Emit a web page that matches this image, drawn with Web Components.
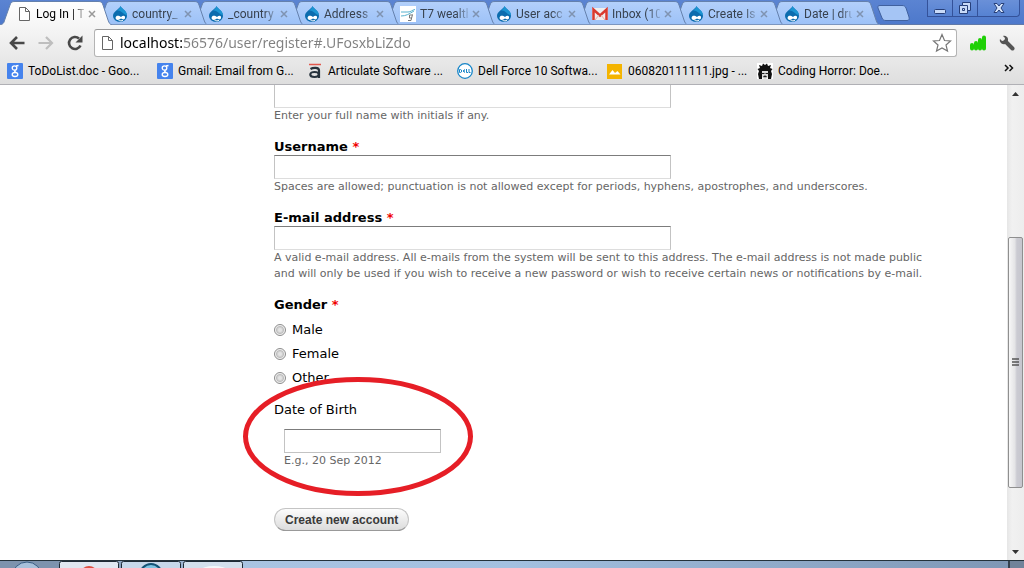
<!DOCTYPE html>
<html lang="en">
<head>
<meta charset="utf-8">
<title>Log In</title>
<style>
  html, body {
    margin: 0;
    height: 100%;
  }
  body {
    overflow: hidden;
    background: white;
    font-family: "DejaVu Sans", sans-serif;
  }
</style>
</head>
<body>
<browser-window>
  <browser-tab slot="tab" icon="page" active>Log In | T</browser-tab>
  <browser-tab slot="tab" icon="drupal">country_</browser-tab>
  <browser-tab slot="tab" icon="drupal">_country</browser-tab>
  <browser-tab slot="tab" icon="drupal">Address</browser-tab>
  <browser-tab slot="tab" icon="wealth">T7 wealth</browser-tab>
  <browser-tab slot="tab" icon="drupal">User acc</browser-tab>
  <browser-tab slot="tab" icon="gmail">Inbox (10</browser-tab>
  <browser-tab slot="tab" icon="drupal">Create Is</browser-tab>
  <browser-tab slot="tab" icon="drupal">Date | dru</browser-tab>

  <book-mark slot="bookmark" icon="google">ToDoList.doc - Goo...</book-mark>
  <book-mark slot="bookmark" icon="google">Gmail: Email from G...</book-mark>
  <book-mark slot="bookmark" icon="articulate">Articulate Software ...</book-mark>
  <book-mark slot="bookmark" icon="dell">Dell Force 10 Softwa...</book-mark>
  <book-mark slot="bookmark" icon="picture">060820111111.jpg - ...</book-mark>
  <book-mark slot="bookmark" icon="horror">Coding Horror: Doe...</book-mark>

  <register-form>
    <form-field cut name="Full name">Enter your full name with initials if any.</form-field>
    <form-field label="Username" required>Spaces are allowed; punctuation is not allowed except for periods, hyphens, apostrophes, and underscores.</form-field>
    <form-field label="E-mail address" required>A valid e-mail address. All e-mails from the system will be sent to this address. The e-mail address is not made public and will only be used if you wish to receive a new password or wish to receive certain news or notifications by e-mail.</form-field>
    <radio-group label="Gender" options="Male,Female,Other"></radio-group>
    <date-field label="Date of Birth">E.g., 20 Sep 2012</date-field>
    <submit-button>Create new account</submit-button>
  </register-form>
</browser-window>

<script>
const drop = `
  <path d="M8.600 0C9 2.500 15 4.500 15 10A7 6 0 0 1 1 10C1 5.500 6.500 4 8.600 0Z" fill="#0b6cae"/>
  <path d="M8.600 0C9 2.500 15 4.500 15 9C11 9 10 4 5 4.500C7 3 8 2 8.600 0Z" fill="#1b94d2"/>
  <path d="M3.500 12C4 8.800 7 9.500 9 11C11 9 13.500 9.500 13 12C12.500 14.500 10 13 9 12.500C6.500 14.600 4 14.200 3.500 12Z" fill="#fff"/>
  <path d="M6.500 14.200C8 15.200 10 15 11 14.200" stroke="#fff" fill="none"/>`;

const icons = {
  page: `<path d="M3.500 1.500H9.500L13.500 5.500V14.500H3.500Z" fill="#fff" stroke="#666"/><path d="M9.500 1.500V5.500H13.500" fill="none" stroke="#666"/>`,
  drupal: drop,
  wealth: `<rect width="16" height="16" fill="#fff"/><path d="M1 6H8C11 6 12 4 15 3.500M1 10C6 10 9 8 14 5" stroke="#57b2cf" fill="none"/><path d="M12.500 9H9.500V12H12M12.500 8.500L11 14.500H8" stroke="#777" fill="none"/>`,
  gmail: `<rect y="2" width="16" height="12" rx="1" fill="#eee"/><path d="M1.500 14V3.500L8 9.500L14.500 3.500V14" fill="none" stroke="#d9392f" stroke-width="2.500"/><path d="M3 14L7 9M13 14L9 9" stroke="#e9a9a5"/>`,
  google: `<rect width="16" height="16" rx="1" fill="#4583ed"/><g fill="none" stroke="#fff" stroke-width="1.300"><ellipse cx="7.500" cy="5" rx="2.300" ry="2.200"/><path d="M9 3L11.500 2.500M8.500 7C7 8 7.500 8.500 9 9.500"/><ellipse cx="8" cy="11.500" rx="2.800" ry="2"/></g>`,
  articulate: `<path d="M2 1.500H14" stroke="#e2574c" stroke-width="1.500"/><g fill="none" stroke="#26323c" stroke-width="2.200"><path d="M3.500 6C6 4.500 12 4 12 7.500V15"/><ellipse cx="7.500" cy="11.500" rx="4.200" ry="2.500"/></g>`,
  dell: `<circle cx="8" cy="8" r="7.300" fill="#fff" stroke="#1685c8" stroke-width="1.300"/><path d="M2.500 6.500V9.500H3.500C5 9.500 5 6.500 3.500 6.500ZM8 6.500L6 8L8 9.500M6.500 8H8M9.500 6V9.500H11M12 6V9.500H13.500" fill="none" stroke="#1685c8"/>`,
  picture: `<rect width="15" height="15" y="1" fill="#f4b400"/><path d="M2 11.500L5.500 7L8 10L10.500 8L13.500 11.500Z" fill="#fff"/>`,
  horror: `<rect width="16" height="16" fill="#fff"/><path d="M2 16L1 11L2 8L0.500 6L3 5L2 2L5 3L6 0.500L8 2L10 0.500L11 3L14 2L13 5L15.500 6L14 8L15 11L14 16H11V10H5V16Z" fill="#111"/><path d="M5 8H11V14L9 16H7L5 14Z" fill="#ddd"/><path d="M4 10.500H7.500M8.500 10.500H12M6.500 14C7.500 13 8.500 13 9.500 14" stroke="#222" stroke-width="1.200" fill="none"/>`,
};

const icon = (name) => `<svg width="16" height="16" viewBox="0 0 16 16" aria-hidden="true">${icons[name]}</svg>`;

class BrowserTab extends HTMLElement {
  constructor() {
    super();
    this.attachShadow({ mode: "open" });
  }

  connectedCallback() {
    const active = this.hasAttribute("active");
    this.shadowRoot.innerHTML = `
      <style>
        :host {
          display: grid;
          flex: 0 1 112px;
          margin-right: -16px;
          height: 25px;
          font: 12px/16px Roboto, sans-serif;
          color: #38424f;
        }
        :host([active]) {
          color: black;
        }
        .shape, .row {
          grid-area: 1 / 1;
        }
        .shape {
          width: 100%;
          height: 25px;
        }
        .row {
          display: flex;
          align-items: center;
          gap: 4px;
          padding: 2px 16px 0;
          min-width: 0;
        }
        .row svg {
          flex: none;
        }
        .title {
          flex: 1;
          min-width: 0;
          overflow: hidden;
          white-space: nowrap;
          mask-image: linear-gradient(to right, black 75%, rgba(0, 0, 0, 0.2));
        }
        button {
          border: 0;
          padding: 0;
          width: 8px;
          height: 16px;
          background: none;
          display: grid;
          place-items: center;
        }
      </style>
      <svg class="shape" viewBox="0 0 112 25" preserveAspectRatio="none" aria-hidden="true">
        <defs>
          <linearGradient id="fill" x2="0" y2="1">
            <stop stop-color="${active ? "#ffffff" : "#b3d0fb"}"/>
            <stop offset="1" stop-color="${active ? "#f6f6f6" : "#9cc1f7"}"/>
          </linearGradient>
        </defs>
        <path d="M0 25C4 24 4 22 5 19L10 5C11 2 12 1.500 15 1.500H98C101 1.500 102 2 103 5L108 20C109 23 110 24.500 112 25" fill="url(#fill)" stroke="#6581ad"/>
        ${active ? "" : '<path d="M0 24.500H112" stroke="#7c96bf"/>'}
      </svg>
      <div class="row">
        ${icon(this.getAttribute("icon"))}
        <span class="title"><slot></slot></span>
        <button aria-label="Close tab">
          <svg width="8" height="8" viewBox="0 0 8 8"><path d="M1 1L7 7M7 1L1 7" stroke="${active ? "#999" : "#7f93b1"}" stroke-width="1.500"/></svg>
        </button>
      </div>
    `;
  }
}

customElements.define("browser-tab", BrowserTab);

class BookMark extends HTMLElement {
  constructor() {
    super();
    this.attachShadow({ mode: "open" });
  }

  connectedCallback() {
    this.shadowRoot.innerHTML = `
      <style>
        :host {
          display: block;
          flex: 0 1 150px;
          min-width: 0;
        }
        a {
          display: flex;
          align-items: center;
          gap: 5px;
          color: black;
          text-decoration: none;
          white-space: nowrap;
          font: 12px/16px Roboto, sans-serif;
        }
        svg {
          flex: none;
        }
      </style>
      <a href="#">${icon(this.getAttribute("icon"))}<span><slot></slot></span></a>
    `;
  }
}

customElements.define("book-mark", BookMark);

class FormField extends HTMLElement {
  constructor() {
    super();
    this.attachShadow({ mode: "open" });
  }

  connectedCallback() {
    const label = this.getAttribute("label");
    this.shadowRoot.innerHTML = `
      <style>
        :host {
          display: block;
          margin-bottom: 14px;
        }
        label {
          display: block;
          font: bold 13px/17px "DejaVu Sans", sans-serif;
        }
        .required {
          color: #f00000;
        }
        input {
          display: block;
          box-sizing: border-box;
          width: 397px;
          max-width: 100%;
          height: 24px;
          border: 1px solid #c3c3c3;
          border-top-color: #7c7c7c;
          border-bottom-color: #ddd;
          background: white;
          padding: 2px;
          outline: 0;
        }
        :host([cut]) input {
          border-top: 0;
          height: 23px;
        }
        .help {
          font-size: 11px;
          line-height: 16px;
          color: #666;
        }
      </style>
      ${label ? `<label for="field">${label} ${this.hasAttribute("required") ? '<span class="required">*</span>' : ""}</label>` : ""}
      <input id="field" type="text" ${label ? "" : `aria-label="${this.getAttribute("name")}"`}>
      <div class="help"><slot></slot></div>
    `;
  }
}

customElements.define("form-field", FormField);

class RadioGroup extends HTMLElement {
  constructor() {
    super();
    this.attachShadow({ mode: "open" });
  }

  connectedCallback() {
    const options = this.getAttribute("options").split(",");
    this.shadowRoot.innerHTML = `
      <style>
        :host {
          display: block;
          margin-bottom: 12px;
          font-size: 13px;
          line-height: 17px;
        }
        fieldset {
          margin: 0;
          padding: 0;
          border: 0;
        }
        legend {
          padding: 0;
          margin-bottom: 4px;
          font-weight: bold;
        }
        .required {
          color: #f00000;
        }
        .option {
          display: flex;
          align-items: center;
          gap: 6px;
          height: 24px;
        }
        input {
          appearance: none;
          box-sizing: border-box;
          width: 12px;
          height: 12px;
          margin: 2px 0 0;
          border: 1px solid #8c8c8c;
          border-radius: 50%;
          background: radial-gradient(#e4e4e4 20%, #c0c0c0 50%, #f4f4f4 65%);
        }
      </style>
      <fieldset>
        <legend>${this.getAttribute("label")} <span class="required">*</span></legend>
        ${options.map((option, i) => `
          <div class="option">
            <input type="radio" name="choice" id="option${i}">
            <label for="option${i}">${option}</label>
          </div>`).join("")}
      </fieldset>
    `;
  }
}

customElements.define("radio-group", RadioGroup);

class DateField extends HTMLElement {
  constructor() {
    super();
    this.attachShadow({ mode: "open" });
  }

  connectedCallback() {
    this.shadowRoot.innerHTML = `
      <style>
        :host {
          display: block;
          position: relative;
          margin-bottom: 39px;
        }
        label {
          display: block;
          font-size: 13px;
          line-height: 17px;
          margin-bottom: 11px;
        }
        .indent {
          padding-left: 10px;
        }
        input {
          display: block;
          box-sizing: border-box;
          width: 157px;
          height: 24px;
          border: 1px solid #c3c3c3;
          border-top-color: #7c7c7c;
          background: white;
          outline: 0;
        }
        .help {
          font-size: 11px;
          line-height: 16px;
          color: #666;
        }
        /* red marker drawn over the field */
        .marker {
          position: absolute;
          left: -31px;
          top: -24px;
          pointer-events: none;
        }
      </style>
      <label for="date">${this.getAttribute("label")}</label>
      <div class="indent">
        <input id="date" type="text">
        <div class="help"><slot></slot></div>
      </div>
      <svg class="marker" width="230" height="119" viewBox="0 0 230 119" aria-hidden="true">
        <ellipse cx="115" cy="59.500" rx="112.500" ry="57" fill="none" stroke="#e61e26" stroke-width="5"/>
      </svg>
    `;
  }
}

customElements.define("date-field", DateField);

class SubmitButton extends HTMLElement {
  constructor() {
    super();
    this.attachShadow({ mode: "open" });
    this.shadowRoot.innerHTML = `
      <style>
        :host {
          display: block;
        }
        button {
          height: 23px;
          padding: 0 10px;
          border: 1px solid #c4c4c4;
          border-bottom-color: #999;
          border-radius: 12px;
          background: linear-gradient(#fcfcfc, #dcdcdc);
          color: #3a3a3a;
          font: bold 12px/16px "Liberation Sans", Arial, sans-serif;
        }
      </style>
      <button type="submit"><slot></slot></button>
    `;
  }
}

customElements.define("submit-button", SubmitButton);

class RegisterForm extends HTMLElement {
  constructor() {
    super();
    this.attachShadow({ mode: "open" });
    this.shadowRoot.innerHTML = `
      <style>
        :host {
          display: block;
          flex: 1;
          min-width: 0;
          overflow: hidden;
          background: white;
          color: black;
        }
        form {
          padding: 0 72px 0 274px;
        }
      </style>
      <form><slot></slot></form>
    `;
  }
}

customElements.define("register-form", RegisterForm);

class ScrollBar extends HTMLElement {
  constructor() {
    super();
    this.attachShadow({ mode: "open" });
    this.shadowRoot.innerHTML = `
      <style>
        :host {
          display: flex;
          flex-direction: column;
          flex: none;
          width: 17px;
          box-sizing: border-box;
          padding: 0 1px;
          background: linear-gradient(to right, #e6e6e6, #f1f1f1 30%, #ededed);
        }
        .arrow {
          height: 17px;
          display: grid;
          place-items: center;
        }
        .above {
          flex: 135;
        }
        .thumb {
          flex: 250;
          box-sizing: border-box;
          border: 1px solid #8f8f8f;
          border-radius: 2px;
          background: linear-gradient(to right, #f7f7f7, #e4e4e6 45%, #cbcbd2 60%, #c6c6ce);
          display: grid;
          place-items: center;
        }
        .below {
          flex: 55;
        }
      </style>
      <div class="arrow"><svg width="7" height="4"><path d="M0 4L3.500 0L7 4Z" fill="#333"/></svg></div>
      <div class="above"></div>
      <div class="thumb"><svg width="7" height="8"><path d="M0 1H7M0 4H7M0 7H7" stroke="#555" stroke-width="1.500"/></svg></div>
      <div class="below"></div>
      <div class="arrow"><svg width="7" height="4"><path d="M0 0L3.500 4L7 0Z" fill="#333"/></svg></div>
    `;
  }
}

customElements.define("scroll-bar", ScrollBar);

class WindowControls extends HTMLElement {
  constructor() {
    super();
    this.attachShadow({ mode: "open" });
    this.shadowRoot.innerHTML = `
      <style>
        :host {
          display: flex;
          flex: none;
          height: 17px;
          margin-right: 4px;
        }
        button {
          box-sizing: border-box;
          width: 26px;
          padding: 0;
          margin-left: -1px;
          border: 1px solid #34529a;
          border-top: 0;
          background: linear-gradient(#6a90d8, #5682d2);
          display: grid;
          place-items: center;
        }
        button:first-child {
          border-bottom-left-radius: 4px;
        }
        button:last-child {
          width: 43px;
          border-bottom-right-radius: 4px;
        }
        svg {
          fill: none;
          stroke: #27407a;
        }
      </style>
      <button aria-label="Minimize"><svg width="14" height="14"><rect x="1.500" y="8.500" width="11" height="4" rx="1" fill="#c9dbf8"/></svg></button>
      <button aria-label="Restore"><svg width="14" height="14"><path d="M4.500 1.500H12.500V9.500H9.500V12.500H1.500V4.500H4.500Z" fill="#c9dbf8"/><path d="M4.500 4.500H9.500V9.500M4.500 7.500H6.500V9.500H4.500Z"/></svg></button>
      <button aria-label="Close"><svg width="14" height="14"><path d="M2 2.500H5L7 5L9 2.500H12L9 7L12 11.500H9L7 9L5 11.500H2L5 7Z" fill="#d5e3fa"/></svg></button>
    `;
  }
}

customElements.define("window-controls", WindowControls);

class TaskBar extends HTMLElement {
  constructor() {
    super();
    this.attachShadow({ mode: "open" });
    this.shadowRoot.innerHTML = `
      <style>
        :host {
          display: flex;
          box-sizing: border-box;
          height: 8px;
          border-top: 1px solid #24323b;
          background: linear-gradient(to right, #7d93ae 60px, #a9c4e2 240px, #a3c0e0 50%, #7d96b4);
          overflow: hidden;
        }
        svg {
          flex: none;
        }
        .desktop {
          margin-left: auto;
          width: 14px;
          border-left: 2px solid #33414f;
          background: #71839a;
        }
      </style>
      <svg width="244" height="7" viewBox="0 0 244 7" aria-hidden="true">
        <circle cx="27" cy="16" r="15" fill="#a8c0da" stroke="#365a80"/>
        <g fill="#dfe7f1" stroke="#1e2b36">
          <rect x="59.500" y="0.500" width="59" height="12" rx="2"/>
          <rect x="121.500" y="0.500" width="59" height="12" rx="2" fill="#c7d8ea"/>
          <rect x="183.500" y="0.500" width="59" height="12" rx="2" fill="#d3e0ed"/>
        </g>
        <circle cx="89" cy="14" r="9" fill="#dd4f41"/>
        <circle cx="151" cy="14" r="11" fill="#7fc3e2" stroke="#145274" stroke-width="2"/>
        <ellipse cx="214" cy="9" rx="13" ry="4" fill="#f3f8fb"/>
      </svg>
      <div class="desktop"></div>
    `;
  }
}

customElements.define("task-bar", TaskBar);

class BrowserWindow extends HTMLElement {
  constructor() {
    super();
    this.attachShadow({ mode: "open" });
    this.shadowRoot.innerHTML = `
      <style>
        :host {
          display: grid;
          grid-template-rows: auto auto auto 1fr auto;
          height: 100vh;
        }
        .strip {
          display: flex;
          justify-content: space-between;
          background: linear-gradient(#5b84d2, #4d78cb);
          height: 25px;
          box-shadow: inset 0 -1px #6079a8;
        }
        .tabs {
          display: flex;
          flex: 1;
          min-width: 0;
        }
        .new-tab {
          border: 0;
          padding: 0;
          margin-left: 13px;
          background: none;
          height: 25px;
        }
        .toolbar {
          display: flex;
          align-items: center;
          gap: 13px;
          padding: 4px 9px 1px;
          background: linear-gradient(#f6f6f6, #e9e9e9);
        }
        .toolbar button {
          flex: none;
          border: 0;
          padding: 0;
          background: none;
          width: 16px;
          height: 16px;
        }
        .toolbar svg {
          display: block;
        }
        .address {
          display: flex;
          flex: 1;
          align-items: center;
          gap: 5px;
          box-sizing: border-box;
          height: 28px;
          padding: 0 4px;
          margin-left: -2px;
          border: 1px solid #b4b4b4;
          border-top-color: #989898;
          border-radius: 3px;
          background: white;
        }
        /* the host part is black, the path grey */
        .address input {
          flex: 1;
          min-width: 0;
          border: 0;
          padding: 0;
          outline: 0;
          font: 14px/20px "Noto Sans", sans-serif;
          color: transparent;
          background: linear-gradient(to right, black 63px, #808080 63px);
          background-clip: text;
        }
        .toolbar .star {
          width: 20px;
          height: 20px;
        }
        .bookmarks {
          display: flex;
          align-items: center;
          height: 26px;
          padding: 0 10px 0 7px;
          border-bottom: 1px solid #b0b0b5;
          background: linear-gradient(#e9e9e9, #dedede);
        }
        .more {
          margin: 0 0 8px auto;
          border: 0;
          padding: 0;
          background: none;
        }
        .page {
          display: flex;
          min-height: 0;
        }
      </style>
      <div class="strip">
        <div class="tabs">
          <slot name="tab"></slot>
          <button class="new-tab" aria-label="New tab">
            <svg width="34" height="25"><path d="M3 5.500H25C27 5.500 28 6 29 8L32 17C32.500 19 32 20.500 30 20.500H9C7 20.500 6 20 5 18L1 8C0.500 6.500 1 5.500 3 5.500Z" fill="#a5c5f5" stroke="#40619f"/></svg>
          </button>
        </div>
        <window-controls></window-controls>
      </div>
      <div class="toolbar">
        <button aria-label="Back"><svg width="16" height="16"><path d="M15.500 8H3M8 2L2 8L8 14" fill="none" stroke="#484848" stroke-width="2.600"/></svg></button>
        <button aria-label="Forward"><svg width="16" height="16"><path d="M0.500 8H13M8 2L14 8L8 14" fill="none" stroke="#bebebe" stroke-width="2.200"/></svg></button>
        <button aria-label="Reload"><svg width="16" height="16"><path d="M13.500 10.500A6 6 0 1 1 12 3.500" fill="none" stroke="#484848" stroke-width="2.600"/><path d="M15.500 0.500V7.500H8.500Z" fill="#484848"/></svg></button>
        <div class="address">
          ${icon("page")}
          <input type="text" aria-label="Address" value="localhost:56576/user/register#.UFosxbLiZdo">
          <button class="star" aria-label="Bookmark this page"><svg width="20" height="20"><path d="M10 1.500L12.500 7.500L18.500 8L14 12L15.500 18L10 15L4.500 18L6 12L1.500 8L7.500 7.500Z" fill="#fff" stroke="#777" stroke-width="1.200"/></svg></button>
        </div>
        <button aria-label="Signal"><svg width="16" height="16"><path d="M2 13.500V10M6 13.500V8M10 13.500V5M14 13.500V2.500" stroke="#1fd006" stroke-width="4" stroke-linecap="round"/></svg></button>
        <button aria-label="Settings"><svg width="16" height="16"><path d="M6.500 6.500L13.500 13.500" stroke="#555" stroke-width="4" stroke-linecap="round"/><path d="M4 1L6 3L5.500 5.500L3 6L1 4C0 7 3 10 6 9C9 8 10 4 8 2C7 1 5.500 0.500 4 1Z" fill="#555"/></svg></button>
      </div>
      <div class="bookmarks">
        <slot name="bookmark"></slot>
        <button class="more" aria-label="More bookmarks"><svg width="10" height="8"><path d="M1 1L4 4L1 7M5.500 1L8.500 4L5.500 7" fill="none" stroke="#111" stroke-width="1.500"/></svg></button>
      </div>
      <div class="page">
        <slot></slot>
        <scroll-bar></scroll-bar>
      </div>
      <task-bar></task-bar>
    `;
  }

  connectedCallback() {
    // Each tab covers the left edge of the next one
    const tabs = this.querySelectorAll("browser-tab");
    tabs.forEach((tab, i) => {
      tab.style.zIndex = tabs.length - i;
    });
  }
}

customElements.define("browser-window", BrowserWindow);
</script>
</body>
</html>
